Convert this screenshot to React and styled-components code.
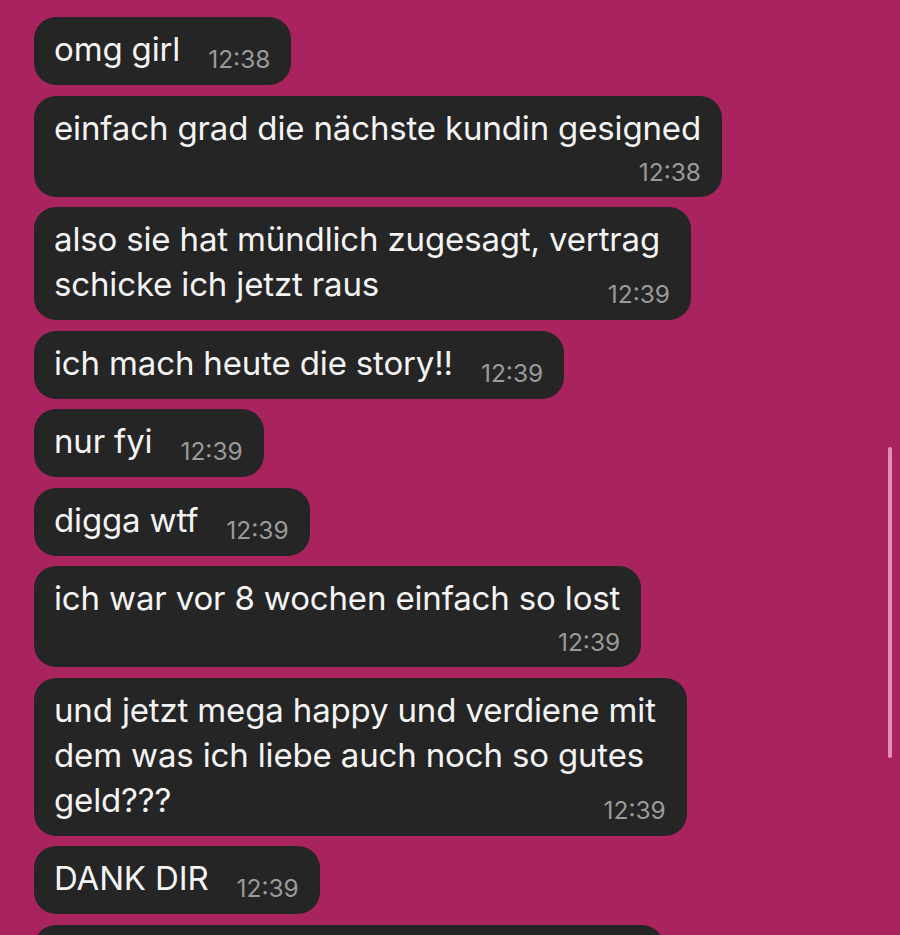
import styled, { createGlobalStyle } from "styled-components";

const GlobalStyle = createGlobalStyle`
  html, body {
    margin: 0;
    padding: 0;
    height: 100%;
    overflow: hidden;
    background: #a9235e;
  }
`;

const Chat = styled.div`
  position: relative;
  height: 935px;
  padding: 17px 0 0 34px;
  box-sizing: border-box;
  display: flex;
  flex-direction: column;
  align-items: flex-start;
  gap: 10.5px;
  font-family: Inter, "Liberation Sans", sans-serif;
`;

const Bubble = styled.div`
  background: #252525;
  border-radius: 22px;
  padding: 10px 21px 13px 20px;
  max-width: 660px;
  min-height: ${(p) => (p.$cut ? "60px" : "auto")};
  width: ${(p) => p.$width || "auto"};
  box-sizing: ${(p) => (p.$width ? "border-box" : "content-box")};
`;

const Text = styled.div`
  color: #f4f4f4;
  font-size: 33px;
  line-height: 45px;
  letter-spacing: -0.15px;
  white-space: nowrap;
  padding-right: ${(p) => (p.$multi ? "10px" : "0")};
`;

const Time = styled.span`
  float: ${(p) => (p.$stack ? "none" : "right")};
  display: block;
  text-align: right;
  margin: ${(p) =>
    p.$stack ? "9px 0 0 0" : `20px ${p.$multi ? "-10px" : "0"} 0 28px`};
  color: #9a9a9a;
  font-size: 24.5px;
  line-height: 24px;
  letter-spacing: 0;
`;

const ScrollThumb = styled.div`
  position: absolute;
  right: 8px;
  top: 447px;
  width: 4px;
  height: 311px;
  border-radius: 2px;
  background: #e58db5;
`;

const messages = [
  { lines: ["omg girl"], time: "12:38" },
  { lines: ["einfach grad die nächste kundin gesigned"], time: "12:38", stack: true },
  { lines: ["also sie hat mündlich zugesagt, vertrag", "schicke ich jetzt raus"], time: "12:39" },
  { lines: ["ich mach heute die story!!"], time: "12:39" },
  { lines: ["nur fyi"], time: "12:39" },
  { lines: ["digga wtf"], time: "12:39" },
  { lines: ["ich war vor 8 wochen einfach so lost"], time: "12:39", stack: true },
  {
    lines: ["und jetzt mega happy und verdiene mit", "dem was ich liebe auch noch so gutes", "geld???"],
    time: "12:39",
  },
  { lines: ["DANK DIR"], time: "12:39" },
];

function Message({ lines, time, stack }) {
  const multi = lines.length > 1;
  return (
    <Bubble>
      <Text $multi={multi}>
        {lines.map((l, i) => (
          <span key={i}>
            {i > 0 && <br />}
            {l}
          </span>
        ))}
        {!stack && <Time $multi={multi}>{time}</Time>}
      </Text>
      {stack && <Time $stack>{time}</Time>}
    </Bubble>
  );
}

export default function App() {
  return (
    <>
      <GlobalStyle />
      <Chat>
        {messages.map((m, i) => (
          <Message key={i} {...m} />
        ))}
        <Bubble $cut $width="630px" />
        <ScrollThumb />
      </Chat>
    </>
  );
}
